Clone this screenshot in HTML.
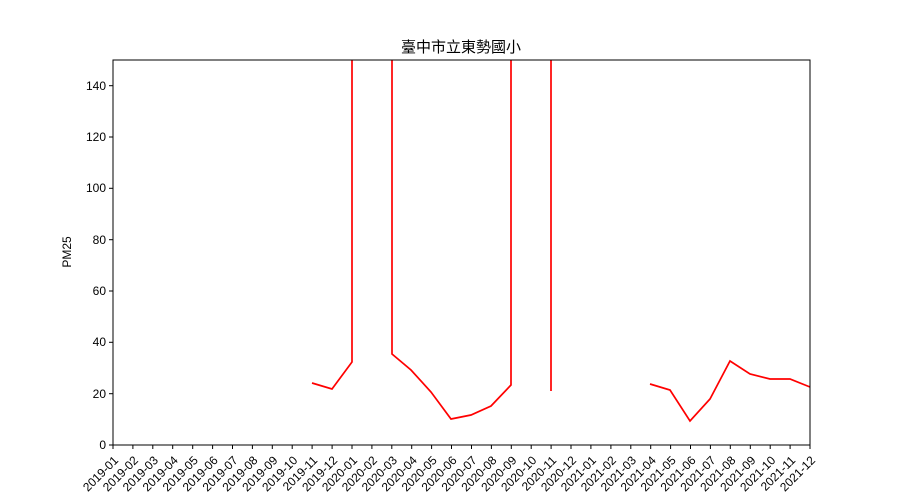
<!DOCTYPE html>
<html><head><meta charset="utf-8"><style>
html,body{margin:0;padding:0;background:#fff;}
svg{display:block;}
text{font-family:"Liberation Sans","Noto Sans CJK TC",sans-serif;fill:#000;}
</style></head><body>
<svg width="900" height="500" viewBox="0 0 900 500" xmlns="http://www.w3.org/2000/svg">
<rect width="900" height="500" fill="#fff"/>
<text x="461" y="52" font-size="15" text-anchor="middle">臺中市立東勢國小</text>
<defs><clipPath id="c"><rect x="113" y="60" width="697" height="385"/></clipPath></defs>
<g clip-path="url(#c)" fill="none" stroke="#ff0000" stroke-width="1.7">
<polyline points="312,383 332,389 352,362 352,40"/>
<polyline points="392,40 392,354 411,370 431,392 451,419 471,415 491,406 511,385 511,40"/>
<polyline points="551,40 551,391"/>
<polyline points="650,384 670,390 690,421 710,399 730,361 750,374 770,379 790,379 810,387"/>
</g>
<rect x="113" y="60" width="697" height="385" fill="none" stroke="#000" stroke-width="1"/>
<g stroke="#000" stroke-width="1">
<line x1="113" y1="445" x2="109" y2="445"/>
<line x1="113" y1="393.7" x2="109" y2="393.7"/>
<line x1="113" y1="342.3" x2="109" y2="342.3"/>
<line x1="113" y1="291" x2="109" y2="291"/>
<line x1="113" y1="239.7" x2="109" y2="239.7"/>
<line x1="113" y1="188.3" x2="109" y2="188.3"/>
<line x1="113" y1="137" x2="109" y2="137"/>
<line x1="113" y1="85.7" x2="109" y2="85.7"/>
<line x1="113.0" y1="445" x2="113.0" y2="449"/><line x1="132.9" y1="445" x2="132.9" y2="449"/><line x1="152.8" y1="445" x2="152.8" y2="449"/><line x1="172.7" y1="445" x2="172.7" y2="449"/><line x1="192.7" y1="445" x2="192.7" y2="449"/><line x1="212.6" y1="445" x2="212.6" y2="449"/><line x1="232.5" y1="445" x2="232.5" y2="449"/><line x1="252.4" y1="445" x2="252.4" y2="449"/><line x1="272.3" y1="445" x2="272.3" y2="449"/><line x1="292.2" y1="445" x2="292.2" y2="449"/><line x1="312.1" y1="445" x2="312.1" y2="449"/><line x1="332.1" y1="445" x2="332.1" y2="449"/><line x1="352.0" y1="445" x2="352.0" y2="449"/><line x1="371.9" y1="445" x2="371.9" y2="449"/><line x1="391.8" y1="445" x2="391.8" y2="449"/><line x1="411.7" y1="445" x2="411.7" y2="449"/><line x1="431.6" y1="445" x2="431.6" y2="449"/><line x1="451.5" y1="445" x2="451.5" y2="449"/><line x1="471.5" y1="445" x2="471.5" y2="449"/><line x1="491.4" y1="445" x2="491.4" y2="449"/><line x1="511.3" y1="445" x2="511.3" y2="449"/><line x1="531.2" y1="445" x2="531.2" y2="449"/><line x1="551.1" y1="445" x2="551.1" y2="449"/><line x1="571.0" y1="445" x2="571.0" y2="449"/><line x1="590.9" y1="445" x2="590.9" y2="449"/><line x1="610.9" y1="445" x2="610.9" y2="449"/><line x1="630.8" y1="445" x2="630.8" y2="449"/><line x1="650.7" y1="445" x2="650.7" y2="449"/><line x1="670.6" y1="445" x2="670.6" y2="449"/><line x1="690.5" y1="445" x2="690.5" y2="449"/><line x1="710.4" y1="445" x2="710.4" y2="449"/><line x1="730.3" y1="445" x2="730.3" y2="449"/><line x1="750.3" y1="445" x2="750.3" y2="449"/><line x1="770.2" y1="445" x2="770.2" y2="449"/><line x1="790.1" y1="445" x2="790.1" y2="449"/><line x1="810.0" y1="445" x2="810.0" y2="449"/>
</g>
<g font-size="12" text-anchor="end">
<text x="106" y="449">0</text>
<text x="106" y="398">20</text>
<text x="106" y="346">40</text>
<text x="106" y="295">60</text>
<text x="106" y="244">80</text>
<text x="106" y="192">100</text>
<text x="106" y="141">120</text>
<text x="106" y="90">140</text>
</g>
<text transform="translate(71,252) rotate(-90)" font-size="12" text-anchor="middle">PM25</text>
<g font-size="12" text-anchor="end">
<text transform="translate(119.0,461) rotate(-45)">2019-01</text>
<text transform="translate(138.9,461) rotate(-45)">2019-02</text>
<text transform="translate(158.8,461) rotate(-45)">2019-03</text>
<text transform="translate(178.7,461) rotate(-45)">2019-04</text>
<text transform="translate(198.7,461) rotate(-45)">2019-05</text>
<text transform="translate(218.6,461) rotate(-45)">2019-06</text>
<text transform="translate(238.5,461) rotate(-45)">2019-07</text>
<text transform="translate(258.4,461) rotate(-45)">2019-08</text>
<text transform="translate(278.3,461) rotate(-45)">2019-09</text>
<text transform="translate(298.2,461) rotate(-45)">2019-10</text>
<text transform="translate(318.1,461) rotate(-45)">2019-11</text>
<text transform="translate(338.1,461) rotate(-45)">2019-12</text>
<text transform="translate(358.0,461) rotate(-45)">2020-01</text>
<text transform="translate(377.9,461) rotate(-45)">2020-02</text>
<text transform="translate(397.8,461) rotate(-45)">2020-03</text>
<text transform="translate(417.7,461) rotate(-45)">2020-04</text>
<text transform="translate(437.6,461) rotate(-45)">2020-05</text>
<text transform="translate(457.5,461) rotate(-45)">2020-06</text>
<text transform="translate(477.5,461) rotate(-45)">2020-07</text>
<text transform="translate(497.4,461) rotate(-45)">2020-08</text>
<text transform="translate(517.3,461) rotate(-45)">2020-09</text>
<text transform="translate(537.2,461) rotate(-45)">2020-10</text>
<text transform="translate(557.1,461) rotate(-45)">2020-11</text>
<text transform="translate(577.0,461) rotate(-45)">2020-12</text>
<text transform="translate(596.9,461) rotate(-45)">2021-01</text>
<text transform="translate(616.9,461) rotate(-45)">2021-02</text>
<text transform="translate(636.8,461) rotate(-45)">2021-03</text>
<text transform="translate(656.7,461) rotate(-45)">2021-04</text>
<text transform="translate(676.6,461) rotate(-45)">2021-05</text>
<text transform="translate(696.5,461) rotate(-45)">2021-06</text>
<text transform="translate(716.4,461) rotate(-45)">2021-07</text>
<text transform="translate(736.3,461) rotate(-45)">2021-08</text>
<text transform="translate(756.3,461) rotate(-45)">2021-09</text>
<text transform="translate(776.2,461) rotate(-45)">2021-10</text>
<text transform="translate(796.1,461) rotate(-45)">2021-11</text>
<text transform="translate(816.0,461) rotate(-45)">2021-12</text>
</g>
</svg>
</body></html>
